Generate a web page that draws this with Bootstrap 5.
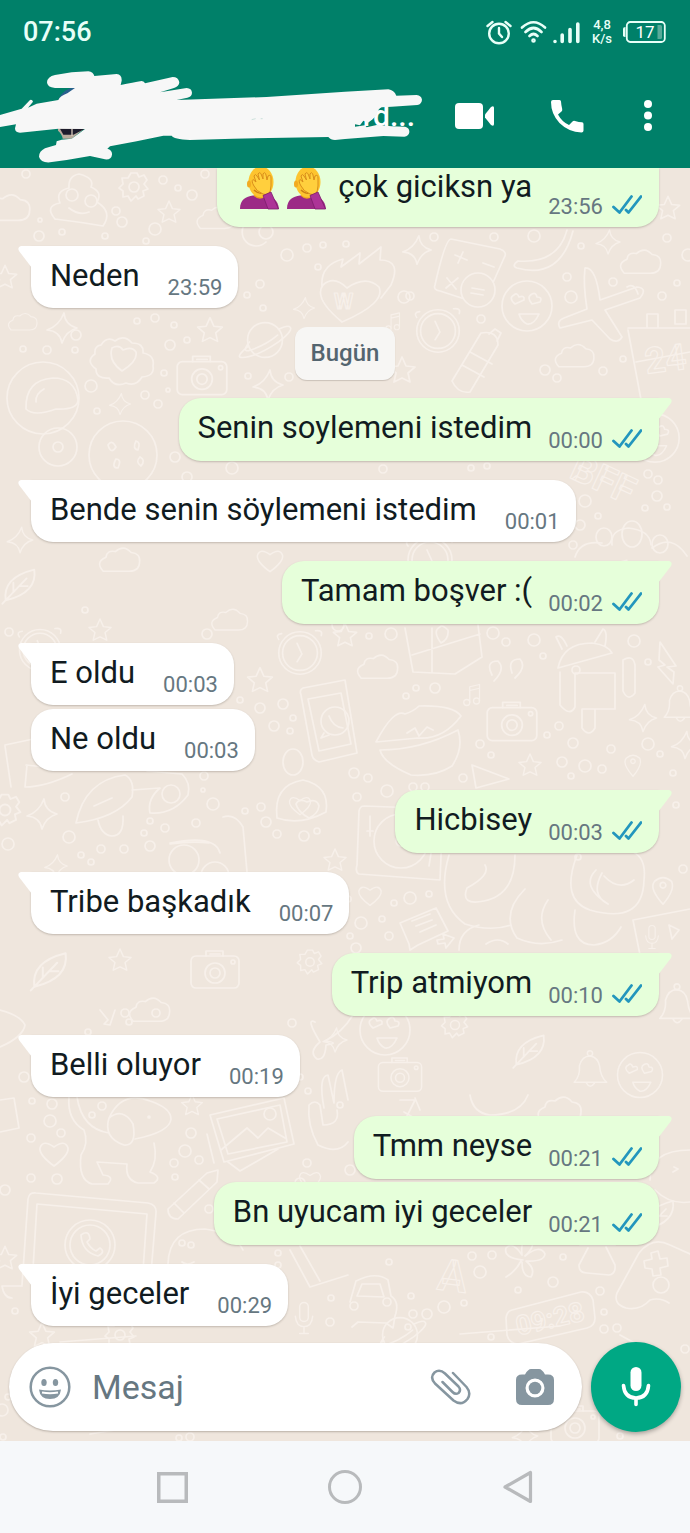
<!DOCTYPE html>
<html lang="tr">
<head>
<meta charset="utf-8">
<meta name="viewport" content="width=device-width, initial-scale=1">
<title>Sohbet</title>
<link href="https://cdn.jsdelivr.net/npm/bootstrap@5.3.0/dist/css/bootstrap.min.css" rel="stylesheet">
<style>
  body { font-family: Roboto, "Noto Sans", sans-serif; background: #efe6dd; color: #111b21; }
  svg { display: block; flex: none; }
  .topbar { background: #008069; color: #fff; }
  .statusbar { height: 64px; padding: 0 24px 0 23px; }
  .clock { font-size: 27px; line-height: 32px; font-weight: 500; color: #e8fff8; }
  .netspeed { font-size: 13px; line-height: 14px; font-weight: 500; margin: 0 11px 0 12px; color: #e8fff8; }
  .toolbar { height: 104px; padding-right: 38px; }
  .contact { font-size: 30px; line-height: 36px; font-weight: 500; margin-right: 40px; }
  .icon-btn { background: none; border: 0; padding: 0; color: inherit; }
  .toolbar .icon-btn + .icon-btn { margin-left: 56px; }
  .scribble { position: absolute; left: 0; top: 0; pointer-events: none; }
  .chat { overflow: hidden; }
  .wallpaper { position: absolute; inset: 0; width: 100%; height: 100%; }
  .thread { padding: 0 31px 16px; }
  .bubble { position: relative; display: flex; align-items: flex-end; margin-top: 19px; border-radius: 22px; box-shadow: 0 1px 2px rgba(60, 50, 40, .25); }
  .bubble p { font-size: 31px; line-height: 40px; margin: 0; align-self: flex-start; }
  .bubble time { font-size: 22px; line-height: 26px; color: #667781; white-space: nowrap; }
  .sent { align-self: flex-end; background: #e6ffda; min-height: 63px; padding: 10px 17px 7px 19px; }
  .sent time { margin: 0 9px 0 16px; }
  .sent .ticks { margin-bottom: 6px; }
  .received { align-self: flex-start; background: #fff; min-height: 62px; padding: 10px 16px 7px 19px; }
  .received time { margin-left: 28px; }
  .grouped { margin-top: 4px; }
  .sent.grouped { margin-top: 3px; }
  .sent.tail { border-top-right-radius: 0; }
  .received.tail { border-top-left-radius: 0; }
  .tail::before { content: ""; position: absolute; top: 0; width: 14px; height: 22px; background: inherit; }
  .received.tail::before { left: -13px; clip-path: path("M3 0H14V22L1 5Q-1 1 3 0Z"); }
  .sent.tail::before { right: -13px; clip-path: path("M11 0H0V22L13 5Q15 1 11 0Z"); }
  .cut { margin-top: 0; min-height: 59px; padding-top: 0; border-top-left-radius: 0; border-top-right-radius: 0; }
  .cut p { line-height: 38px; }
  .day { font-size: 24px; line-height: 29px; font-weight: 500; color: #54656f; background: #f7f6f4; border-radius: 12px; padding: 12px 16px; margin: 19px 0 -1px; box-shadow: 0 1px 1px rgba(60, 50, 40, .2); }
  .composer { padding: 0 9px 9px; gap: 9px; }
  .entry { min-width: 0; height: 88px; border-radius: 44px; background: #fff; color: #8696a0; padding: 0 28px 0 20px; box-shadow: 0 1px 2px rgba(60, 50, 40, .3); }
  .entry input { min-width: 0; border: 0; outline: 0; background: none; font-size: 34px; line-height: 44px; padding: 0; margin-left: 21px; color: #111b21; }
  .entry input::placeholder { color: #667781; opacity: 1; }
  .entry .icon-btn + .icon-btn { margin-left: 45px; }
  .voice { width: 90px; height: 90px; border-radius: 50%; background: #00a884; color: #fff; flex: none; box-shadow: 0 2px 4px rgba(0, 0, 0, .3); }
  .sysnav { height: 92px; background: #f6f8fa; padding: 0 12.5%; color: #b8babc; }
</style>
</head>
<body class="d-flex flex-column min-vh-100">

<svg width="0" height="0" class="position-absolute" aria-hidden="true">
  <defs>
    <symbol id="ticks" viewBox="0 0 30 19"><path d="M1.500 12 7.500 17.500 19.500 1.500M14 15 16.500 17.500 29 1.500" fill="none" stroke="#2396bd" stroke-width="2.800" stroke-linecap="round" stroke-linejoin="round"/></symbol>
    <symbol id="facepalm" viewBox="0 0 39 42">
      <path d="M0 41C0 31 6 29 13 27.500H26C33 29 38 32 39 41Z" fill="#9c2a86"/>
      <path d="M14 22h11v7q-6 4-11-1Z" fill="#eda11f"/>
      <ellipse cx="21" cy="14" rx="12.500" ry="15.500" fill="#fdc42f"/>
      <ellipse cx="9" cy="16" rx="2" ry="3.500" fill="#f2ab22"/>
      <path d="M14 22q4 4 9 3" fill="none" stroke="#c98016" stroke-width="1.400"/>
      <path d="M14 18Q11 13 13 11.500L16 14 14 8Q15 5 17 8L19.500 12 18 6Q20 3 21.500 7L23 11 23 6Q25 3 26 7L27 12 28 8Q31 6 31 10L31 18Q31 23 28 27L23 26Q16 23 14 18Z" fill="#ffcf3d" stroke="#d98e1b" stroke-width="1" stroke-linejoin="round"/>
      <path d="M23 27.500 31 24 38.500 41H28Z" fill="#ad3397" stroke="#7c1d6c" stroke-width=".8"/>
    </symbol>
    <symbol id="d-star" viewBox="-20 -20 40 40"><path d="M0-13 4-4 13-3 6 3 8 12 0 8-8 12-6 3-13-3-4-4Z"/></symbol>
    <symbol id="d-spark" viewBox="-20 -20 40 40"><path d="M2-15Q3-3 15 0 4 3 0 15-2 3-15 2-3-2 2-15Z"/></symbol>
    <symbol id="d-cloud" viewBox="-30 -20 60 40"><path d="M-18 12Q-27 2-15-3-14-11-5-9 4-17 12-8 22-7 21 2 21 12 10 12Z"/></symbol>
    <symbol id="d-heart" viewBox="-20 -20 40 40"><path d="M0 13Q-15 2-14-5-11-14 0-6 11-14 14-5 15 2 0 13Z"/></symbol>
    <symbol id="d-camera" viewBox="-30 -25 60 50"><rect x="-24" y="-14" width="48" height="32" rx="5"/><path d="M-9-14v-5H8v5M-5-16H5"/><circle cy="3" r="10"/><circle cy="3" r="5"/><circle cx="18" cy="-8" r="2"/></symbol>
    <symbol id="d-clock" viewBox="-30 -30 60 60"><circle r="22"/><circle r="18"/><path d="M-3-10 2 1-3 9M-19-20q-7 1-3 6M16-23q8-1 6 5"/></symbol>
    <symbol id="d-gear" viewBox="-20 -20 40 40"><circle r="5"/><path d="M-3-14H3L5-10 10-12 13-7 10-3 14 2 9 4 10 9 4 12 2 9-3 14-6 9-11 10-11 4-15 1-11-3-12-9-6-9Z"/></symbol>
    <symbol id="d-note" viewBox="-15 -20 30 40"><circle cx="-7" cy="10" r="4"/><circle cx="6" cy="8" r="4"/><path d="M-3 10V-11L10-14V8M-3-6 10-9"/></symbol>
    <symbol id="d-face" viewBox="-30 -30 60 60"><circle r="25"/><path d="M-12-2q-7-6-1-9 3-3 5 2 6-2 5 3Zm17 0q-6-7 0-10 4-2 5 3 6 0 3 5ZM-8 8H12Q7 19 0 18-6 15-8 8Z"/></symbol>
    <symbol id="d-pin" viewBox="-15 -20 30 40"><path d="M0 15Q-15-2-9-9 0-17 9-9 13 0 0 15Z"/><circle cy="-5" r="3"/></symbol>
    <symbol id="d-bell" viewBox="-22 -25 44 50"><path d="M-18 14Q-11 7-12-5-9-16 0-16 9-15 11-4 12 8 19 14ZM-4 15q4 7 9 0"/><circle cy="-19" r="3"/></symbol>
    <symbol id="d-mic" viewBox="-15 -22 30 44"><rect x="-5" y="-18" width="10" height="22" rx="5"/><path d="M-10-2Q-9 10 0 10T10-2M0 10v8M-5 18H5"/></symbol>
    <symbol id="d-planet" viewBox="-32 -25 64 50"><circle r="18"/><path d="M-17 6Q-30 17-25 18-11 19 14 2 31-11 25-14 22-15 14-11M-16 2Q-24 12-17 11 0 6 13-5"/></symbol>
    <symbol id="d-leaf" viewBox="-20 -20 40 40"><path d="M-13 14Q-16-7 13-14 16 7-13 14M-16 17 6-6M-6 6V-2M0 1H7"/></symbol>
  </defs>
</svg>

<header class="topbar position-relative">
  <div class="statusbar d-flex align-items-center">
    <span class="clock me-auto">07:56</span>
    <svg width="26" height="25" viewBox="0 0 26 25" fill="none" stroke="#e8fff8" stroke-width="2.400" stroke-linecap="round" role="img" aria-label="Alarm"><circle cx="13" cy="13.500" r="9.800"/><path d="M13 8v5.500l3 3.500M1.500 6 6.500 2M24.500 6l-5-4"/></svg>
    <svg class="ms-2" width="27" height="24" viewBox="0 0 27 24" fill="none" stroke="#e8fff8" stroke-width="2.600" stroke-linecap="round" role="img" aria-label="Wi-Fi"><path d="M2 7.500Q13.500-3 25 7.500M5.500 12Q13.500 4 21.500 12M9.500 16Q13.500 12 17.500 16"/><circle cx="13.500" cy="20.500" r="1" /></svg>
    <svg class="ms-1" width="29" height="23" viewBox="0 0 29 23" stroke="#e8fff8" stroke-width="3.600" stroke-linecap="round" role="img" aria-label="Sinyal"><path d="M4 20.500v0M11.200 20.500V14M19 20.500V8.500M26.800 20.500V3"/></svg>
    <span class="netspeed text-center">4,8<br>K/s</span>
    <svg width="43" height="22" viewBox="0 0 43 22" role="img" aria-label="Pil 17"><rect x="3.800" y="1" width="38" height="20" rx="3.500" fill="none" stroke="#e8fff8" stroke-width="1.800"/><path d="M0 7.500Q0 6 2.500 6V16Q0 16 0 14.500Z" fill="#e8fff8"/><path d="M34.500 4h3Q39 4 39 5.500v11q0 1.500-1.500 1.500h-3Z" fill="#58aa99"/><text x="22" y="17" fill="#fff" font-size="17" text-anchor="middle">17</text></svg>
  </div>
  <div class="toolbar d-flex align-items-center justify-content-end">
    <h1 class="contact mb-0">rd...</h1>
    <button class="icon-btn" type="button" aria-label="Görüntülü arama"><svg width="39" height="26" viewBox="0 0 39 26" fill="currentColor"><rect width="28" height="26" rx="4"/><path d="M30 11.500 36 4Q39 2 39 5V21Q39 24 36 22L30 14.500Z"/></svg></button>
    <button class="icon-btn" type="button" aria-label="Sesli arama"><svg width="34" height="34" viewBox="0 0 34 34" fill="currentColor"><path d="M3 1H9.500Q11 1 11 2.500 11.200 6 12.200 10 12.500 11.500 11.500 12.500L8 15.500Q12 23 19 26L22.500 22.500Q23.500 21.500 25 22 29 23.200 32 23.200 33.500 23.500 33.500 25V31.500Q33.500 33.500 31.500 33.500 18.500 33 9.500 24 1 15 1 3 1 1 3 1Z"/></svg></button>
    <button class="icon-btn" type="button" aria-label="Menü"><svg class="ms-1" width="8" height="32" viewBox="0 0 8 32" fill="currentColor"><circle cx="4" cy="4" r="4"/><circle cx="4" cy="15.500" r="4"/><circle cx="4" cy="27" r="4"/></svg></button>
  </div>
  <svg class="scribble" width="430" height="168" viewBox="0 0 1290 504" aria-hidden="true">
    <path d="M175 300Q185 268 225 262V300Z" fill="#285f8d"/><path d="M270 268l35-14v18Z" fill="#4c4450"/>
    <path d="M174 382H258L215 416H188Q186 402 174 392Z" fill="#b9aa9c"/><path d="M180 386H255L220 404H190Z" fill="#1d1c2c"/><path d="M216 386v22" stroke="#d8c9bb" stroke-width="4"/>
    <path fill="#f7f7f7" d="M0 345 65 326 90 300Q97 298 99 305L84 323 110 311 175 300Q180 288 202 280L225 264H165Q141 262 141 247 142 230 165 225 215 214 265 214 280 216 283 228L350 222Q366 224 365 242L362 255Q400 248 425 243 433 244 435 250L518 231Q535 231 538 247 537 260 522 264L480 277 560 264Q575 265 576 278 576 290 562 293L530 300 800 291 1035 275 1165 268Q1182 270 1189 287L1250 285Q1264 287 1266 299 1265 312 1252 315L1175 320 1145 322Q1134 326 1130 345L1118 358 1104 368 1090 362 1080 376 1065 373V380L1095 376 1100 382 1130 375 1175 379 1215 380Q1229 383 1228 397 1226 409 1213 410L1150 408 1035 417 1005 420Q992 420 985 411L700 416 570 420Q520 417 515 407H490L410 424 330 439 322 446Q337 450 336 464 334 480 315 478L270 468 200 480 150 487Q122 489 117 470 117 454 135 445L168 435 170 424 185 419 215 416 255 387 175 386 60 398Q45 398 45 385L48 373 0 381Z"/>
    <path d="M755 359l12-3M782 356h6" stroke="#b8d6cf" stroke-width="2"/>
  </svg>
</header>

<main class="chat position-relative flex-fill d-flex flex-column">
  <svg class="wallpaper" viewBox="0 168 690 1273" preserveAspectRatio="xMinYMin slice" fill="none" stroke="#f7f0ea" stroke-width="1.700" stroke-linejoin="round" stroke-linecap="round" aria-hidden="true">
    <g id="doodles"></g>
    <path d="M55 219Q44 206 60 203 55 191 69 188 68 176 79 174 95 178 91 187 103 192 97 202 113 212 103 226 80 222 55 219M69 208q10 8 20 4"/><circle cx="72" cy="195" r="6"/><circle cx="91" cy="201" r="6"/>
    <circle cx="43" cy="398" r="36"/><path d="M26 409Q25 380 53 378 75 378 78 400 78 410 56 409 34 417 26 409M36 402q-1-8 8-13"/>
    <circle cx="123" cy="455" r="34"/><path d="M108 445q4-6 8 2-5 8-8-2m28-4q5 1 2 9-6-1-2-9m-20 18q6 0 2 9-7 0-2-9m24-2q6 3 1 9-6-4-1-9"/><circle cx="58" cy="447" r="19"/><circle cx="58" cy="447" r="5"/>
    <path d="M101 345q6-9 14-4 9-7 17 2 12 0 11 10 12 2 10 13 2 10-11 11-6 10-16 6-11 5-17-5-13 1-13-9-11-8-1-15-1-8 6-9M112 348q7-4 11 2 9-4 13 2 2 9-14 19-14-10-10-23M266 222a14 14 0 1 0 0 20"/><circle cx="266" cy="232" r="7"/>
    <path d="M342 322Q313 298 323 285 334 275 347 288 366 275 379 287 386 303 342 322M322 287Q320 265 343 259L341 267 360 253 359 264 381 247 380 260Q402 260 391 285L381 298"/>
    <path d="M451 239Q445 240 435 285 433 290 440 291L483 305 504 258Q508 252 500 249ZM455 255l12 5m-4-8-5 11m25 0 11 4m-47 11 9 11m2-11-12 10"/><circle cx="478" cy="290" r="17" fill="#efe6dd"/><path d="m472 288 12 2m-13 3 12 2"/>
    <path d="M567 230Q558 264 518 261 511 266 517 268 560 280 573 231"/>
    <path d="M585 268Q596 267 600 300L637 287Q648 288 640 298L605 310 622 337Q618 344 610 339L592 320 560 328Q556 321 564 318L587 309Q583 284 585 268M627 287q7-5 11 7"/>
    <path d="M452 381 481 333Q498 330 498 345L470 392Q458 394 452 381M462 365l22 12m-14-25 22 12m-3-30 6-5 6 4-4 8"/>
    <path d="M628 328H690M628 330 642 405M636 362 690 352M647 314h11v14h-11zm28-4h11v14h-11z"/>
    <path d="M612 545Q610 530 628 528 650 530 651 545M575 557Q580 540 602 543M652 548q20-15 35 8"/><ellipse cx="632" cy="534" rx="10" ry="13"/><ellipse cx="604" cy="537" rx="8" ry="9"/><ellipse cx="660" cy="544" rx="8" ry="9"/>
    <path d="M405 628 413 672 455 674 482 657 478 625M412 655 480 634M432 628v45M440 627q2-3 8 3 1 9-7 13-9-12-1-16M492 675q-7-14 6-14 8 8-4 20m18-8q-5-14 8-14 7 8-5 19M558 668Q563 643 592 643 608 645 612 653ZM562 649l-6-12q5-4 11 9m28-4 8-13q5 2 2 17M560 672V705q10 12 15 2V673H615V709H582V728q7 10 13 0V710M623 660q10-6 12 5v28q-7 9-12-2ZM660 642l16 24-9 1 7 5-1 12-15-17 7-2-6-5Z"/>
    <path d="M303 688 345 680 357 753 319 762Q313 760 312 755L301 695Q299 690 303 688M308 699 341 693 351 744 319 751Z"/><circle cx="335" cy="721" r="14"/><path d="m324 733-3 5 8-3m0-19q4 11 14 12"/>
    <path d="M277 818Q273 785 303 780 330 786 326 812 300 826 277 818M296 804q3-6 11-2 10-4 12 4-1 8-10 12-11-6-13-14"/><ellipse cx="293" cy="762" rx="10" ry="13"/>
    <path d="M76 823Q85 780 125 775 135 780 132 797 116 818 76 823M94 806l18-8M132 790 160 788Q147 799 150 813 173 815 188 795 191 783 182 774L147 771M98 820q3 15 14 16 12 0 11-20"/><circle cx="171" cy="794" r="9"/>
    <path d="M5 745 38 738 40 750M26 765 72 770 63 745M27 765l-2 22q20 0 47-13M5 746l6 41"/><path d="M223 817q12-4 20 10l4 45M170 843q45-9 50 10m-50-9q22-3 39-1"/><circle cx="184" cy="860" r="15"/><circle cx="215" cy="876" r="14"/>
    <path d="M376 742Q394 708 405 714 414 711 419 706 453 705 461 716 443 740 418 738ZM380 750Q420 750 458 730 464 748 452 766 435 777 411 775 383 763 380 750M407 733l8-5 4 8 8-9 6 3"/>
    <path d="M472 765l4 23 33-9ZM364 806 443 809 440 880 359 874Q355 872 357 865L359 811Q360 806 364 806"/><circle cx="401" cy="841" r="27"/><circle cx="401" cy="841" r="5"/><path d="M370 816v20m-3-5h6m59 16-3 19"/>
    <path d="M449 855Q435 903 465 924 490 932 511 925M515 855Q515 895 484 901 460 906 467 888 491 875 485 865M525 889Q500 914 517 938 539 948 562 940M548 900q-14 20 3 40M577 855Q560 900 590 910 643 925 644 880 647 855 628 850M602 873Q590 895 608 904 580 886 596 870M604 876q15 16 30 4M575 910Q570 945 594 945 612 943 621 927M486 944q12-8 22 0M459 950q0-20 20-25"/>
    <path d="M400 923 436 908 448 931 418 945 410 950 409 944ZM412 921l18-7m-14 12 16-6m-12 12 16-7M437 940l7-1-1-5 11 4-8 10-1-5-7 1ZM640 955 633 920 690 909M669 925l10 5-7 9Z"/>
    <path d="M69 1097Q67 1120 84 1130 89 1143 81 1155 78 1180 92 1184H108Q115 1176 103 1175L97 1162 127 1164Q125 1180 138 1183H154Q163 1177 150 1172 158 1160 154 1143M109 1118Q103 1138 124 1145 137 1146 133 1124 123 1107 109 1118Q122 1090 150 1101 171 1108 171 1119 170 1132 135 1139M77 1097q5 32 32 36"/><circle cx="149" cy="1117" r="1"/>
    <path d="M210 1115 284 1098 294 1144 224 1162ZM217 1119 280 1105 287 1142 228 1154ZM221 1150 247 1128 258 1138 268 1128 285 1138M207 1134l7 29M228 1162l12 9 38-22"/><circle cx="270" cy="1114" r="6"/>
    <path d="M324 1108q-6-32 4-33l6 28m0 0q0-30 8-33l6 30M309 1105q6-6 11 0l3 20q17 0 14-15M309 1105q-2 20 9 40 20 10 30-3"/>
    <path d="M168 1209 207 1173 218 1170 217 1182 178 1219Q168 1219 168 1209M174 1203l10 10m15-33 10 9"/>
    <path d="M22 1285 28 1199Q29 1192 36 1193L148 1203Q157 1205 156 1213L150 1285M32 1285 37 1204 147 1214 142 1285M2 1286H22M2 1286q2 12 10 12"/><circle cx="90" cy="1245" r="25"/><circle cx="90" cy="1245" r="20"/><path d="M81 1235q8-6 9 4l-3 3q4 7 9 9l4-3q6 4-2 8-16-4-17-21"/>
    <path d="M168 1264Q169 1229 205 1229 235 1233 243 1250M182 1262q5 4 12 0M290 1250 310 1287 348 1275M300 1246l20 35"/><circle cx="182" cy="1243" r="3"/><circle cx="191" cy="1245" r="3"/>
    <path d="M350 1302 356 1281Q376 1271 388 1280L391 1296Q400 1302 395 1316L393 1328 386 1323 358 1322 352 1327M357 1296 362 1284H380L384 1297Z"/><circle cx="354" cy="1306" r="4"/><circle cx="387" cy="1302" r="4"/>
    <path d="M523 1260q-20-2-17-12 7-7 16 7-2-17 8-17 7 7-5 18 15-12 20-2-1 8-19 7 10 8 5 16-9 0-9-15M521 1261q-5 10-15 16"/>
    <path d="M580 1245H615M588 1248l-9 17q0 8 8 8l22 2q7-1 6-10l-9-18M626 1308Q613 1304 617 1293L639 1253Q652 1236 670 1245L690 1254M626 1308Q640 1311 650 1300 660 1297 669 1303M651 1253l7-2 2 8 7-1 1 8-8 2 1 7-8 1-1-7-7-1-1-7 8-2Z"/><circle cx="661" cy="1285" r="8"/>
    <path d="M512 1310 581 1292Q590 1291 593 1300L595 1318Q595 1326 587 1328L518 1344Q509 1343 507 1335L506 1318Q507 1311 512 1310"/>
    <path d="M650 1180q0-30 40-30M655 1190q15 15 35 12M674 1167l4 2-5 3M470 1095q3 18 20 20 30 0 38-20M420 1110l-5-12M400 1100l14 0m-10 12 12 7m-1-19-10 20"/>
    <path d="M0 1010q20 5 25 15-2 12-25 22M100 1010l8 10-4 4 6 1 5-15M315 1022q-10-5 5 20-12 10-3 17 8 2 9-14 15-2-1-4 20-10 30-30M0 1100 14 1098 19 1128 0 1132M60 1342l76-6M90 1434l44-7M460 1334l100-8M620 1335l22 12q-2 10-9 6"/>
    <g stroke-width="1.200" font-weight="700" font-family="Roboto, sans-serif"><text x="438" y="1291" font-size="44" transform="rotate(7 452 1275)">A</text><text x="515" y="1328" font-size="27" transform="rotate(-13 550 1318)">09:28</text><text x="645" y="372" font-size="36" transform="rotate(-7 660 360)">24</text><text x="570" y="482" font-size="38" transform="rotate(25 580 475)">BFF</text><text x="334" y="309" font-size="22">W</text></g>
  </svg>

  <section class="thread position-relative flex-fill d-flex flex-column" aria-label="Mesajlar">
    <article class="bubble sent cut"><p class="d-flex"><svg class="ms-1" width="39" height="42" role="img" aria-label="🤦"><use href="#facepalm"/></svg><svg class="ms-2 me-2" width="39" height="42" role="img" aria-label="🤦"><use href="#facepalm"/></svg><span class="ms-1">çok giciksn ya</span></p><time>23:56</time><svg class="ticks" width="30" height="19" role="img" aria-label="Okundu"><use href="#ticks"/></svg></article>
    <article class="bubble received tail"><p>Neden</p><time>23:59</time></article>
    <div class="day align-self-center">Bugün</div>
    <article class="bubble sent tail"><p>Senin soylemeni istedim</p><time>00:00</time><svg class="ticks" width="30" height="19" role="img" aria-label="Okundu"><use href="#ticks"/></svg></article>
    <article class="bubble received tail"><p>Bende senin söylemeni istedim</p><time>00:01</time></article>
    <article class="bubble sent tail"><p>Tamam boşver :(</p><time>00:02</time><svg class="ticks" width="30" height="19" role="img" aria-label="Okundu"><use href="#ticks"/></svg></article>
    <article class="bubble received tail"><p>E oldu</p><time>00:03</time></article>
    <article class="bubble received grouped"><p>Ne oldu</p><time>00:03</time></article>
    <article class="bubble sent tail"><p>Hicbisey</p><time>00:03</time><svg class="ticks" width="30" height="19" role="img" aria-label="Okundu"><use href="#ticks"/></svg></article>
    <article class="bubble received tail"><p>Tribe başkadık</p><time>00:07</time></article>
    <article class="bubble sent tail"><p>Trip atmiyom</p><time>00:10</time><svg class="ticks" width="30" height="19" role="img" aria-label="Okundu"><use href="#ticks"/></svg></article>
    <article class="bubble received tail"><p>Belli oluyor</p><time>00:19</time></article>
    <article class="bubble sent tail"><p>Tmm neyse</p><time>00:21</time><svg class="ticks" width="30" height="19" role="img" aria-label="Okundu"><use href="#ticks"/></svg></article>
    <article class="bubble sent grouped"><p>Bn uyucam iyi geceler</p><time>00:21</time><svg class="ticks" width="30" height="19" role="img" aria-label="Okundu"><use href="#ticks"/></svg></article>
    <article class="bubble received tail"><p>İyi geceler</p><time>00:29</time></article>
  </section>

  <form class="composer position-relative d-flex align-items-center">
    <div class="entry flex-fill d-flex align-items-center">
      <button class="icon-btn" type="button" aria-label="Emoji"><svg width="42" height="42" viewBox="0 0 42 42"><circle cx="21" cy="21" r="19.300" fill="none" stroke="currentColor" stroke-width="2.500"/><ellipse cx="15" cy="16.500" rx="2.700" ry="3.600" fill="currentColor"/><ellipse cx="26.500" cy="16.500" rx="2.700" ry="3.600" fill="currentColor"/><path d="M10 23.500Q21 25.500 32 23.500 31 33 21 33T10 23.500Z" fill="currentColor"/><path d="M13 26.500Q21 28 29 26.500" fill="none" stroke="#fff" stroke-width="1.800"/></svg></button>
      <input class="flex-fill" type="text" placeholder="Mesaj" aria-label="Mesaj">
      <button class="icon-btn" type="button" aria-label="Ekle"><svg width="41" height="37" viewBox="0 0 41 37" fill="none" stroke="currentColor" stroke-width="2.500" stroke-linecap="round" stroke-linejoin="round"><path d="M23 4 36.500 18Q41.500 24 37.500 30 31.500 37.500 23.500 31.500L5 14.500Q-.5 8.500 4.500 3.500 9.500-.5 15 4.500L28.500 17.500Q31.500 21 28.500 24 25.500 26 22.500 23L12.500 13"/></svg></button>
      <button class="icon-btn" type="button" aria-label="Kamera"><svg width="38" height="36" viewBox="0 0 38 36" fill="currentColor"><path fill-rule="evenodd" d="M6 5.500H9Q12 0 15 0H23Q26 0 29 5.500H32Q38 5.500 38 11V30Q38 36 32 36H6Q0 36 0 30V11Q0 5.500 6 5.500ZM19 9.500A9.500 9.500 0 1 0 19 28.500 9.500 9.500 0 1 0 19 9.500Z"/><circle cx="19" cy="19" r="6.300"/></svg></button>
    </div>
    <button class="icon-btn voice d-flex align-items-center justify-content-center" type="button" aria-label="Sesli mesaj"><svg width="30" height="40" viewBox="0 0 30 40"><rect x="9.500" width="11" height="24" rx="5.500" fill="currentColor"/><path d="M2.500 18.500Q3.500 31 15 31T27.500 18.500M15 31V37.500" fill="none" stroke="currentColor" stroke-width="3.600" stroke-linecap="round"/></svg></button>
  </form>
</main>

<nav class="sysnav d-flex align-items-center" aria-label="Sistem gezinmesi">
  <button class="icon-btn flex-fill w-100 d-flex justify-content-center" type="button" aria-label="Son uygulamalar"><svg width="31" height="31" viewBox="0 0 31 31"><rect x="1.750" y="1.750" width="27.500" height="27.500" fill="none" stroke="currentColor" stroke-width="3.500"/></svg></button>
  <button class="icon-btn flex-fill w-100 d-flex justify-content-center" type="button" aria-label="Ana ekran"><svg width="34" height="34" viewBox="0 0 34 34"><circle cx="17" cy="17" r="15.500" fill="none" stroke="currentColor" stroke-width="3"/></svg></button>
  <button class="icon-btn flex-fill w-100 d-flex justify-content-center" type="button" aria-label="Geri"><svg width="30" height="34" viewBox="0 0 30 34"><path d="M27.500 2.500V31.500L2 17Z" fill="none" stroke="currentColor" stroke-width="3.200" stroke-linejoin="round"/></svg></button>
</nav>

<script src="https://cdn.jsdelivr.net/npm/bootstrap@5.3.0/dist/js/bootstrap.bundle.min.js"></script>
<script>
  // Wallpaper: [symbol, centre x, centre y, size]
  const doodles = [
    ['cloud',8,208,62],['gear',134,187,40],['star',169,212,34],['cloud',216,218,52],['spark',62,328,40],['cloud',23,322,40],
    ['camera',202,376,62],['star',210,330,38],['planet',265,340,62],['spark',268,385,40],['spark',120,404,28],['star',5,277,36],
    ['spark',417,250,38],['spark',608,242,32],['star',668,208,36],['cloud',641,262,56],['face',527,306,60],['clock',438,331,58],
    ['note',393,322,26],['cloud',575,356,54],['star',402,370,40],['spark',304,308,28],['face',655,438,58],['star',345,635,36],
    ['cloud',378,667,56],['clock',300,653,58],['star',260,680,38],['gear',5,810,44],['spark',42,814,40],['spark',56,866,30],
    ['note',472,695,30],['camera',512,722,62],['spark',643,718,36],['spark',685,745,36],['bell',680,705,44],['star',530,765,34],
    ['pin',633,765,30],['pin',663,890,38],['heart',370,895,32],['mic',652,937,28],['bell',677,1005,48],['star',192,1105,32],
    ['heart',54,1153,40],['star',5,1258,36],['mic',304,1318,38],['star',335,860,34],['gear',455,1025,36],['gear',310,962,34],
    ['leaf',20,585,44],['spark',20,540,34],['heart',270,560,36],['cloud',120,560,56],['clock',430,560,60],['clock',40,650,56],
    ['leaf',530,1050,42],['camera',400,1075,54],['cloud',560,1110,60],['bell',590,1070,44],['face',385,1030,60],['heart',310,1180,30],
    ['leaf',50,970,48],['star',120,960,34],['camera',215,970,60],['cloud',150,1010,56],['face',640,1075,54],['star',42,1335,38],
    ['camera',575,1425,60],['gear',120,1335,40],['planet',400,1335,62],['spark',525,1436,34],['heart',300,805,30],['cloud',230,620,50],
    ['star',100,630,34],['note',620,570,28],['spark',335,1040,32],['star',500,1150,30],['heart',475,1000,26],['leaf',660,1215,40]
  ];
  // Small bubbles scattered between the drawings: x, y, radius
  const dots = [26,174,4,163,180,4,205,174,4,178,188,3,192,195,5,40,220,2,116,211,4,122,222,5,155,229,6,39,236,5,62,232,3,105,236,3,146,241,3,
    287,255,6,307,248,4,323,245,3,346,244,3,318,267,3,434,237,4,494,237,4,534,236,6,581,246,3,667,238,4,688,255,6,260,284,4,247,295,3,263,308,3,
    410,296,4,404,297,6,571,297,6,613,282,4,567,277,4,662,296,4,677,283,3,481,319,4,76,335,5,137,321,3,155,318,4,174,325,3,170,345,5,187,340,3,
    47,350,4,23,349,3,75,350,3,164,373,3,91,386,6,145,395,4,158,404,4,97,411,3,168,390,2,248,376,3,289,377,4,545,370,5,557,378,4,603,371,4,623,359,3,
    175,457,5,232,468,6,187,477,5,383,469,4,471,468,3,487,466,3,648,474,4,658,480,4,657,496,5,645,508,3,667,507,3,585,501,6,598,516,3,580,525,5,573,545,4,
    9,632,4,207,634,5,85,610,3,338,625,6,369,636,3,391,634,6,493,633,6,506,642,4,534,640,6,543,656,3,576,670,4,634,641,6,648,662,3,
    240,700,3,260,708,5,283,704,5,274,726,5,293,718,3,290,731,3,204,776,4,203,790,2,213,804,6,245,811,3,261,807,4,266,822,5,277,834,4,304,836,5,317,831,3,
    65,797,4,150,821,3,165,828,4,196,823,4,144,833,3,150,846,5,69,837,6,81,855,3,91,862,3,101,849,4,124,849,4,8,844,6,
    416,688,3,435,688,5,406,696,3,480,744,4,491,755,3,547,735,3,559,726,4,573,743,5,611,749,4,648,744,6,660,754,3,673,773,3,571,776,3,585,766,6,602,769,4,562,762,5,
    463,778,4,354,773,5,368,778,4,387,791,6,357,797,4,413,787,4,425,787,4,348,899,3,410,898,6,394,903,3,429,894,3,361,923,6,382,919,3,389,936,4,350,936,3,356,948,5,
    578,857,3,676,805,3,683,869,4,125,1013,4,156,1013,4,129,1022,3,88,1032,3,292,1023,4,24,1077,5,32,1101,3,52,1104,5,50,1121,6,31,1138,4,61,1133,4,31,1178,4,57,1179,5,
    102,1106,4,92,1115,3,191,1133,5,185,1151,6,174,1163,4,199,1160,4,175,1177,3,307,1163,4,209,1209,4,300,1077,3,308,1091,3,300,1183,5,278,1253,3,278,1265,3,331,1298,3,330,1322,4,
    389,1262,3,472,1256,4,492,1255,4,480,1272,6,563,1257,3,553,1282,5,518,1290,3,411,1296,3,413,1314,4,427,1314,5,444,1307,6,464,1303,3,408,1327,3,600,1291,4,604,1312,3,604,1329,4,617,1328,4,491,1337,3,
    8,1397,3,2,1410,6,3,1437,3,179,1438,3,190,1437,4,620,1436,3,685,1349,4,15,1311,3,5,1190,5,350,1170,5,340,1105,3];
  const ns = 'http://www.w3.org/2000/svg', layer = document.getElementById('doodles');
  const add = (tag, attrs) => { const el = document.createElementNS(ns, tag); for (const k in attrs) el.setAttribute(k, attrs[k]); layer.append(el); };
  doodles.forEach(([name, x, y, size]) => add('use', { href: '#d-' + name, x: x - size / 2, y: y - size / 2, width: size, height: size }));
  for (let i = 0; i < dots.length; i += 3) add('circle', { cx: dots[i], cy: dots[i + 1], r: dots[i + 2] });
</script>
</body>
</html>
